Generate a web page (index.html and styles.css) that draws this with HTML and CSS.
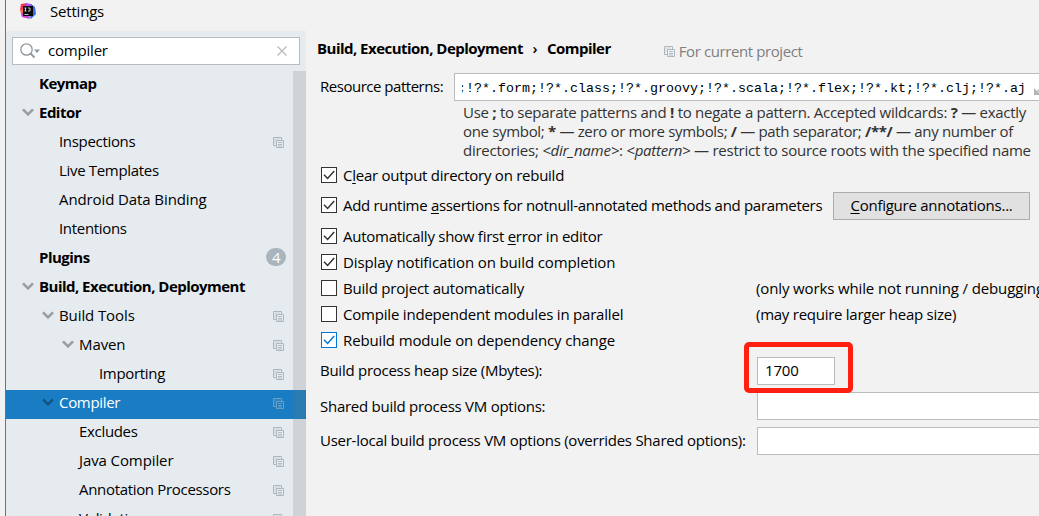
FILE: index.html
```html
<!DOCTYPE html>
<html lang="en">
<head>
<meta charset="utf-8">
<title>Settings</title>
<link rel="stylesheet" href="styles.css">
</head>
<body>
<svg class="defs" aria-hidden="true">
  <symbol id="copy" viewBox="0 0 12 12">
    <path d="M3 8.500H.5V.5h8V3" fill="none" stroke="currentColor"/>
    <path d="M2 7V2h5" fill="none" stroke="currentColor" stroke-opacity=".45"/>
    <path d="M3.500 10.500v-7h7v7z" fill="none" stroke="currentColor"/>
    <path d="M5 5.500h4M5 7.500h4M5 9h4" stroke="currentColor" stroke-width=".9"/>
  </symbol>
  <symbol id="arrow" viewBox="0 0 12 8">
    <path d="M1 1.300l5 5 5-5" fill="none" stroke="currentColor" stroke-width="2.600"/>
  </symbol>
  <symbol id="tick" viewBox="0 0 14 14">
    <path d="M2 6.800l3.600 3.700L12.200 3" fill="none" stroke="currentColor" stroke-width="1.500"/>
  </symbol>
</svg>
<div class="window">
  <header class="titlebar">
    <svg class="logo" viewBox="0 0 16 16">
      <path d="M1 1l6-1-1 8-6-1z" fill="#f5315d"/><path d="M6 0l5 1 4 4-3 6-6-5z" fill="#b74af7"/>
      <path d="M11 1l4 3 1 7-5 5-3-6z" fill="#3b6df0"/><path d="M0 7l6-1 4 9-8-1z" fill="#fb6a4a"/><path d="M1 10l6 0 3 6-8-2z" fill="#c743d8"/>
      <path d="M3 3h10v10H3z" fill="#090909"/><path d="M4.500 5h2M5.500 5v3M4.500 8h2M8 5h2v3H8M4.500 11.500h4" fill="none" stroke="#ddd" stroke-width=".9"/>
    </svg>
    <span class="title">Settings</span>
  </header>
  <div class="body">
    <aside class="sidebar">
      <div class="search">
        <svg class="lens" viewBox="0 0 20 16"><circle cx="6.500" cy="6.500" r="5.700" fill="none" stroke="#8f979d" stroke-width="1.300"/><path d="M10.500 10.500l4 4" stroke="#8f979d" stroke-width="1.800"/><path d="M14 6.500h6l-3 3.500z" fill="#8f979d"/></svg>
        <span class="query">compiler</span>
        <svg class="clear" viewBox="0 0 10 10"><path d="M.5.5l9 9M9.500.5l-9 9" stroke="#b5b9bc" stroke-width="1.200"/></svg>
      </div>
      <div class="tree">
        <div class="node l0 bold"><span>Keymap</span></div>
        <div class="node l0 bold"><svg class="arrow"><use href="#arrow"/></svg><span>Editor</span></div>
        <div class="node l1"><span>Inspections</span><svg class="copy"><use href="#copy"/></svg></div>
        <div class="node l1"><span>Live Templates</span></div>
        <div class="node l1 wide"><span>Android Data Binding</span></div>
        <div class="node l1"><span>Intentions</span></div>
        <div class="node l0 bold"><span>Plugins</span><span class="count">4</span></div>
        <div class="node l0 bold"><svg class="arrow"><use href="#arrow"/></svg><span>Build, Execution, Deployment</span></div>
        <div class="node l1 wide"><svg class="arrow"><use href="#arrow"/></svg><span>Build Tools</span><svg class="copy"><use href="#copy"/></svg></div>
        <div class="node l2 wide"><svg class="arrow"><use href="#arrow"/></svg><span>Maven</span><svg class="copy"><use href="#copy"/></svg></div>
        <div class="node l3"><span>Importing</span><svg class="copy"><use href="#copy"/></svg></div>
        <div class="node l1 selected"><svg class="arrow"><use href="#arrow"/></svg><span>Compiler</span><svg class="copy"><use href="#copy"/></svg></div>
        <div class="node l2"><span>Excludes</span><svg class="copy"><use href="#copy"/></svg></div>
        <div class="node l2 wide"><span>Java Compiler</span><svg class="copy"><use href="#copy"/></svg></div>
        <div class="node l2"><span>Annotation Processors</span><svg class="copy"><use href="#copy"/></svg></div>
        <div class="node l2"><span>Validation</span><svg class="copy"><use href="#copy"/></svg></div>
        <div class="scrollbar"></div>
      </div>
    </aside>
    <main class="main">
      <div class="crumbs">
        <span class="bold">Build, Execution, Deployment</span><span class="sep">›</span><span class="bold">Compiler</span>
        <svg class="copy"><use href="#copy"/></svg><span class="scope">For current project</span>
      </div>
      <div class="patterns">
        <span class="label">Resource patterns:</span>
        <div class="field mono"><span class="cut">;</span><span class="value">!?*.form;!?*.class;!?*.groovy;!?*.scala;!?*.flex;!?*.kt;!?*.clj;!?*.aj</span>
          <svg class="expand" viewBox="0 0 8 8"><path d="M0 1v7h7z" fill="#b3b7ba"/><path d="M3 5l5-5" stroke="#b3b7ba" stroke-width="1.500"/></svg>
        </div>
      </div>
      <div class="help">
        <div class="line1">Use <b>;</b> to separate patterns and <b>!</b> to negate a pattern. Accepted wildcards: <b>?</b> — exactly</div>
        <div class="line2">one symbol; <b>*</b> — zero or more symbols; <b>/</b> — path separator; <b>/**/</b> — any number of</div>
        <div class="line3">directories; <i>&lt;dir_name&gt;</i>: <i>&lt;pattern&gt;</i> — restrict to source roots with the specified name</div>
      </div>
      <div class="check"><i class="box"><svg><use href="#tick"/></svg></i><span class="snug">C<u>l</u>ear output directory on rebuild</span></div>
      <div class="check tall"><i class="box"><svg><use href="#tick"/></svg></i><span class="assertions">Add runtime <u>a</u>ssertions for notnull-annotated methods and parameters</span><div class="button"><span><u>C</u>onfigure annotations...</span></div></div>
      <div class="check"><i class="box"><svg><use href="#tick"/></svg></i><span class="snug">Automatically show first <u>e</u>rror in editor</span></div>
      <div class="check"><i class="box"><svg><use href="#tick"/></svg></i><span class="loose">Display notification on build completion</span></div>
      <div class="check"><i class="box"></i><span class="opt">Build project automatically</span><span class="note loose">(only works while not running / debugging)</span></div>
      <div class="check"><i class="box"></i><span class="opt">Compile independent modules in parallel</span><span class="note snug">(may require larger heap size)</span></div>
      <div class="check"><i class="box focus"><svg><use href="#tick"/></svg></i><span class="loose">Rebuild module on dependency change</span></div>
      <div class="options">
        <span class="snug raised">Build process heap size (Mbytes):</span><div class="field heap"><span class="raised">1700</span><div class="mark"></div></div>
        <span class="snug">Shared build process VM options:</span><div class="field"></div>
        <span class="snug raised">User-local build process VM options (overrides Shared options):</span><div class="field"></div>
      </div>
    </main>
  </div>
</div>
</body>
</html>
```
FILE: styles.css
```css
* { box-sizing: border-box; }
body { margin: 0; background: #f2f2f2; color: #000; font: 15px/20px "Open Sans", "Noto Sans", sans-serif; letter-spacing: -.2px; overflow: hidden; white-space: nowrap; }
svg { display: block; flex: none; }
b { font-weight: 700; }
.bold { font-weight: 700; letter-spacing: -.52px; }
.snug { letter-spacing: -.26px; }
.loose { letter-spacing: -.13px; }
u { text-decoration-thickness: 1px; text-underline-offset: 2px; }
.defs { position: absolute; width: 0; height: 0; }
.window { margin-left: 5px; height: 516px; border-left: 1px solid #6e7173; display: flex; flex-direction: column; overflow: hidden; }
.titlebar { flex: none; height: 31px; display: flex; align-items: flex-start; padding: 1px 0 0 14px; }
.logo { width: 16px; height: 16px; margin-top: 2px; }
.title { margin-left: 14px; }
.body { flex: 1; display: flex; min-height: 0; }
.sidebar { flex: none; width: 300px; background: #e6ebf0; padding-top: 6px; overflow: hidden; }
.search { margin: 0 6px; width: 288px; height: 28px; background: #fff; border: 1px solid #b8bdc2; display: flex; align-items: center; padding: 0 12px 0 7px; }
.lens { width: 20px; height: 16px; }
.query { margin-left: 8px; flex: 1; padding-bottom: 2px; }
.clear { width: 10px; height: 10px; }
.tree { position: relative; margin-top: 6px; height: 464px; letter-spacing: -.32px; }
.node { height: 29px; display: flex; align-items: center; padding-right: 21px; padding-bottom: 5px; }
.node .arrow { width: 12px; height: 8px; color: #989ea2; margin: 0 5px 0 -17px; }
.l0 { padding-left: 33px; }
.l1 { padding-left: 53px; }
.l2 { padding-left: 73px; }
.l3 { padding-left: 93px; }
.wide { letter-spacing: -.1px; }
.copy { width: 12px; height: 12px; color: #acb7bf; }
.node .copy { margin-left: auto; margin-top: 4px; }
.selected { background: #1a7dc4; color: #fff; }
.selected .arrow { color: #125586; }
.selected .copy { color: #6c9fc4; }
.count { margin: 0 -1px 0 auto; width: 20px; height: 18px; border-radius: 9px; background: #a9b5be; color: #fff; font-weight: 400; line-height: 18px; text-align: center; }
.scrollbar { position: absolute; right: 0; top: 0; width: 13px; height: 100%; background: rgba(115, 115, 115, .2); }
.main { flex: 1; min-width: 0; overflow: hidden; }
.crumbs { height: 42px; padding: 0 0 8px 11px; display: flex; align-items: center; }
.sep { width: 24px; text-align: center; font-weight: 600; }
.crumbs .copy { margin: 7px 3px 0 53px; }
.scope { color: #7f7f7f; padding-top: 6px; letter-spacing: -.4px; }
.patterns { display: flex; align-items: center; padding-left: 14px; }
.label { flex: none; width: 134px; letter-spacing: -.48px; padding-bottom: 2px; }
.field { height: 28px; background: #fff; border: 1px solid #bcbcbc; display: flex; align-items: center; }
.patterns .field { flex: none; width: 620px; padding: 3px 0 0 7px; }
.mono { font: 13.330px/20px "Liberation Mono", monospace; letter-spacing: 0; }
.mono .cut { width: 4px; display: flex; justify-content: flex-end; overflow: hidden; }
.expand { width: 8px; height: 8px; margin-left: 8px; margin-top: 4px; }
.help { padding: 2px 0 0 157px; height: 61px; line-height: 19px; color: #333; }
.line1 { letter-spacing: -.28px; }
.line2 { letter-spacing: -.33px; }
.line3 { letter-spacing: -.24px; }
.check { height: 26px; display: flex; align-items: center; padding-left: 15px; }
.box { flex: none; width: 16px; height: 16px; background: #fff; border: 1px solid #333; color: #333; margin-right: 6px; }
.box svg { width: 14px; height: 14px; }
.focus { border-color: #0078d7; color: #0078d7; }
.tall { height: 34px; }
.tall + .check { margin-top: 1px; }
.assertions { flex: none; width: 479px; letter-spacing: -.31px; }
.opt { flex: none; width: 413px; }
.note { flex: none; }
.button { flex: none; margin: 2px 0 0 11px; width: 197px; height: 28px; background: #e1e1e1; border: 1px solid #adadad; display: flex; align-items: center; justify-content: center; padding-bottom: 2px; letter-spacing: -.25px; }
.options { display: grid; grid-template-columns: 437px 620px; row-gap: 7px; align-items: center; padding: 4px 0 0 14px; }
.raised { padding-bottom: 2px; }
.heap { position: relative; width: 78px; padding-left: 7px; }
.mark { position: absolute; left: -14px; top: -16px; width: 109px; height: 51px; border: 5px solid #ff2011; border-radius: 5px; }
```
